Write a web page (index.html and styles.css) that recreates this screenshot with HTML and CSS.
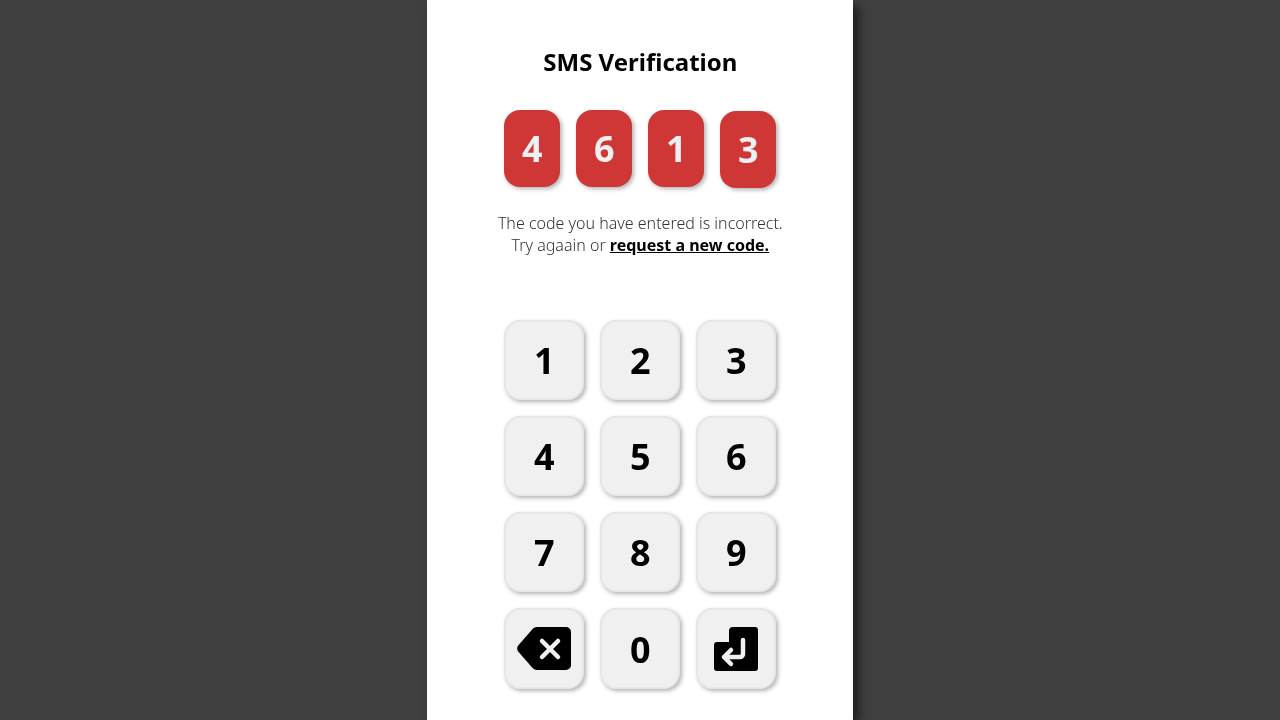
FILE: index.html
```html
<!DOCTYPE html>
<html lang="en">

<head>
    <meta charset="UTF-8">
    <meta name="viewport" content="width=device-width, initial-scale=1.0">
    <title>SMS Verification</title>
    <link rel="stylesheet" href="styles.css">
</head>

<body>
    <main class="phone">
        <div class="content">
            <h1 class="title">SMS Verification</h1>

            <div class="code">
                <span class="digit">4</span>
                <span class="digit">6</span>
                <span class="digit">1</span>
                <span class="digit digitLast">3</span>
            </div>

            <p class="message">
                The code you have entered is incorrect.<br>
                Try agaain or <a href="#" class="newCode">request a new code.</a>
            </p>

            <div class="keypad">
                <button class="key">1</button>
                <button class="key">2</button>
                <button class="key">3</button>
                <button class="key">4</button>
                <button class="key">5</button>
                <button class="key">6</button>
                <button class="key">7</button>
                <button class="key">8</button>
                <button class="key">9</button>
                <button class="key keyIcon" aria-label="Delete">
                    <svg class="icon" width="54" height="43" viewBox="0 0 54 43">
                        <path d="M20 0H49a5 5 0 0 1 5 5V38a5 5 0 0 1-5 5H20a6 6 0 0 1-4.2-1.7L1.6 25a5 5 0 0 1 0-7L15.8 1.7A6 6 0 0 1 20 0Z" fill="#000" />
                        <path d="M25 14L41 30M41 14L25 30" stroke="#f0f0f0" stroke-width="4.5" stroke-linecap="round" fill="none" />
                    </svg>
                </button>
                <button class="key keyZero">0</button>
                <button class="key keyIcon" aria-label="Enter">
                    <svg class="icon" width="44" height="44" viewBox="0 0 44 44">
                        <path d="M15 4a4 4 0 0 1 4-4H41a3 3 0 0 1 3 3V41a3 3 0 0 1-3 3H3a3 3 0 0 1-3-3V18a3 3 0 0 1 3-3H15Z" fill="#000" />
                        <path d="M29 13V27a3 3 0 0 1-3 3H10M17 23L10 30L17 37" stroke="#f0f0f0" stroke-width="4.5" stroke-linecap="round" stroke-linejoin="round" fill="none" />
                    </svg>
                </button>
            </div>
        </div>
    </main>
</body>

</html>
```

FILE: styles.css
```css
* {
    box-sizing: border-box;
}

html,
body {
    height: 100%;
}

body {
    margin: 0;
    padding: 0;
    overflow: hidden;
    background: #404040;
    font-family: "Noto Sans", sans-serif;
}

.phone {
    width: 426.67px;
    height: 720px;
    margin-left: 426.67px;
    background: #fff;
    box-shadow: 5px 5px 10px rgba(0, 0, 0, 0.6);
}

.content {
    display: flex;
    flex-direction: column;
    align-items: center;
    height: 100%;
    will-change: transform;
}

.title {
    margin: 45px 0 0;
    color: #000;
    font-size: 24px;
    font-weight: 700;
    line-height: 33px;
}

.code {
    display: flex;
    gap: 16px;
    margin-top: 32px;
}

.digit {
    display: flex;
    align-items: center;
    justify-content: center;
    width: 56px;
    height: 77px;
    border-radius: 16px;
    background: #cf3737;
    color: #f0f0f0;
    font-size: 36px;
    font-weight: 700;
    box-shadow: 2px 2px 4px rgba(0, 0, 0, 0.3);
}

.digitLast {
    transform: translateY(1px);
}

.message {
    margin: 25px 0 0;
    color: #333;
    font-size: 16px;
    font-weight: 300;
    line-height: 22px;
    text-align: center;
}

.newCode {
    color: #000;
    font-weight: 700;
}

.keypad {
    display: grid;
    grid-template-columns: repeat(3, 80px);
    grid-auto-rows: 80.15px;
    gap: 16px;
    margin-top: 64px;
}

.key {
    display: flex;
    align-items: center;
    justify-content: center;
    padding: 0;
    border: 2px solid #e6e6e6;
    border-radius: 16px;
    background: #f0f0f0;
    color: #000;
    font-family: inherit;
    font-size: 36px;
    font-weight: 700;
    box-shadow: 2px 2px 4px rgba(0, 0, 0, 0.3);
}

.keyIcon {
    padding-top: 1px;
}

.keyZero {
    padding-top: 2px;
}
```
